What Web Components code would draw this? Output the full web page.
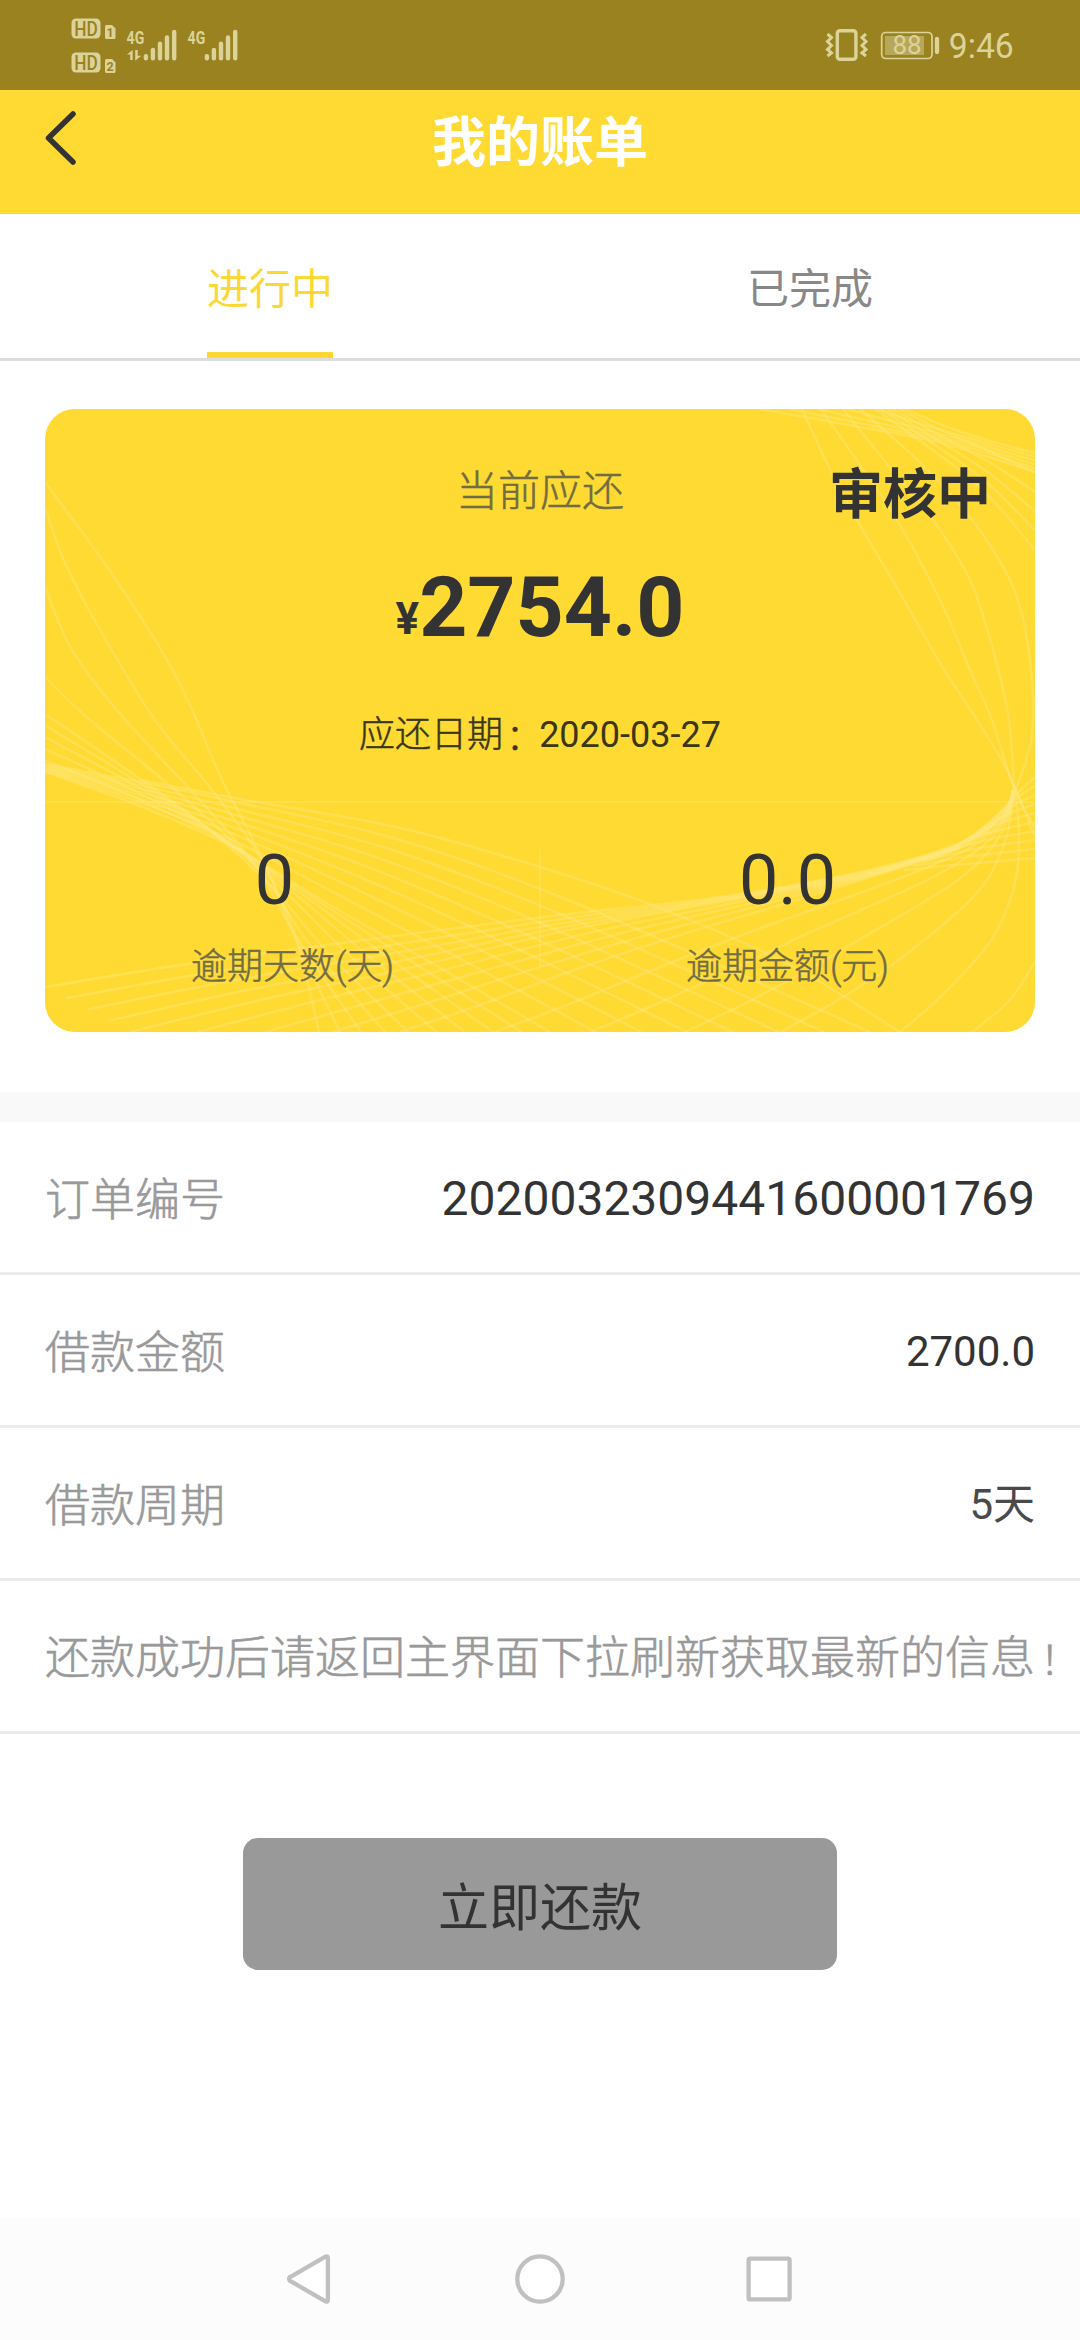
<!DOCTYPE html>
<html lang="zh-CN">
<head>
<meta charset="utf-8">
<title>我的账单</title>
<style>
html,body{margin:0;padding:0;background:#fff}
body{width:1080px;height:2340px;overflow:hidden;font-family:Roboto,"Noto Sans CJK SC",sans-serif;color:#333}
</style>
</head>
<body>
<bill-page></bill-page>
<script>
const define = (name, html, setup) => customElements.define(name, class extends HTMLElement {
  constructor() {
    super();
    const t = document.createElement('template');
    t.innerHTML = html;
    this.attachShadow({ mode: 'open' }).append(t.content.cloneNode(true));
  }
  connectedCallback() { if (setup) setup(this, this.shadowRoot); }
});

define('status-bar', `
<style>
:host{display:flex;justify-content:space-between;height:90px;background:#99821f}
svg{display:block}
text{font-family:Roboto,sans-serif}
</style>
<svg width="300" height="90" fill="#dcd399">
  <rect x="71.5" y="18.5" width="29" height="20" rx="4.5"/>
  <rect x="71.5" y="52.5" width="29" height="20" rx="4.5"/>
  <g fill="#99821f" font-size="19.5" font-weight="500">
    <text x="74.3" y="35.6" textLength="23.6" lengthAdjust="spacingAndGlyphs">HD</text>
    <text x="74.3" y="69.6" textLength="23.6" lengthAdjust="spacingAndGlyphs">HD</text>
  </g>
  <path d="M106.5 25H112l3.500 3.500V37.500a1.500 1.500 0 0 1-1.500 1.500h-7.500a1.500 1.500 0 0 1-1.500-1.500v-11a1.500 1.500 0 0 1 1.500-1.500Z"/>
  <path d="M106.500 59H112l3.500 3.500V71.500a1.500 1.500 0 0 1-1.500 1.500h-7.500a1.500 1.500 0 0 1-1.500-1.500v-11a1.500 1.500 0 0 1 1.500-1.500Z"/>
  <g fill="#99821f" font-size="12.500" font-weight="700" text-anchor="middle">
    <text x="110" y="36.800">1</text><text x="110.200" y="71">2</text>
  </g>
  <g font-size="19" font-weight="700">
    <text x="126.600" y="43.500" textLength="17.600" lengthAdjust="spacingAndGlyphs">4G</text>
    <text x="187.600" y="43.500" textLength="17.600" lengthAdjust="spacingAndGlyphs">4G</text>
  </g>
  <path d="M132.700 50v10h-2.500v-5.500h-3.400ZM135.200 50h2.500v5.800h3.600l-6.100 5Z"/>
  <g stroke="#dcd399" stroke-width="4.400" stroke-linecap="round">
    <path d="M145.900 56.200v2M152.900 50v8.200M160 43.600v14.600M167 37.500v20.700M174.200 32v26.200"/>
    <path d="M206.900 56.200v2M213.900 50v8.200M221 43.600v14.600M228 37.500v20.700M235.200 32v26.200"/>
  </g>
</svg>
<svg width="280" height="90" fill="none" stroke="#dcd399">
  <rect x="37.300" y="30.700" width="18.600" height="28.600" rx="2.500" stroke-width="3.400"/>
  <path d="M27.500 34l4 3.500-4 4 4 4-4 4 4 3.500-4 3M66 34l-4 3.500 4 4-4 4 4 4-4 3.500 4 3" stroke-width="3"/>
  <rect x="81.700" y="32.500" width="50.300" height="26" rx="4" stroke-width="1.700"/>
  <rect x="85" y="36" width="39" height="19" fill="#b8a758" stroke="none"/>
  <path d="M137 39v13" stroke-width="4.300" stroke-linecap="round"/>
  <g fill="#dcd399" stroke="none">
    <text x="107" y="54.300" font-size="26" text-anchor="middle">88</text>
    <text x="148.800" y="57.800" font-size="34.500" textLength="65" lengthAdjust="spacingAndGlyphs">9:46</text>
  </g>
</svg>`);

define('title-bar', `
<style>
:host{display:grid;grid-template-columns:90px 1fr 90px;height:124px;background:#ffda33}
svg{margin:18px 0 0 42px}
h1{margin:14px 0 0;height:80px;line-height:80px;font-size:54px;font-weight:700;color:#fff;text-align:center}
</style>
<svg width="40" height="60" fill="none" stroke="#333" stroke-width="5.500" stroke-linecap="round" stroke-linejoin="round"><path d="M31 6 6.500 30 31 54"/></svg>
<h1><slot></slot></h1>`);

define('tab-item', `
<style>
:host{display:flex;flex:1;justify-content:center;color:#888}
span{box-sizing:border-box;height:144px;padding-top:46px;line-height:60px;font-size:42px}
:host([active]) span{color:#fdd835;border-bottom:6px solid #fdd835}
</style><span><slot></slot></span>`);

define('tab-strip', `
<style>:host{display:flex;height:144px;border-bottom:3px solid #ddd}</style><slot></slot>`);

define('wave-lines', `
<style>:host{display:block;position:absolute;inset:0}svg{display:block;opacity:.38}</style>
<svg width="990" height="623" viewBox="45 409 990 623" fill="none" stroke="#fff" stroke-opacity=".4" stroke-width="2.500"></svg>`,
(host, root) => {
  const svg = root.querySelector('svg');
  const draw = p => {
    let d = `M${p[0]}`;
    for (let i = 0; i < p.length - 1; i++) {
      const a = p[i - 1] || p[i], b = p[i], c = p[i + 1], e = p[i + 2] || c;
      d += `C${b[0] + (c[0] - a[0]) / 6} ${b[1] + (c[1] - a[1]) / 6} ${c[0] - (e[0] - b[0]) / 6} ${c[1] - (e[1] - b[1]) / 6} ${c[0]} ${c[1]}`;
    }
    const el = document.createElementNS('http://www.w3.org/2000/svg', 'path');
    el.setAttribute('d', d);
    svg.append(el);
  };
  const blend = (from, to, n) => {
    for (let k = 0; k < n; k++) draw(from.map(([x, y], i) => [x + (to[i][0] - x) * k / n, y + (to[i][1] - y) * k / n]));
  };
  // sheaf that falls from the left edge
  draw([[45,482],[119,584],[178,680],[222,780],[253,840],[290,920],[306,975],[319,1032]]);
  draw([[45,508],[66,565],[99,628],[155,720],[212,790],[262,860],[296,940],[340,1032]]);
  draw([[45,587],[72,650],[121,715],[195,795],[255,865],[298,940],[361,1032]]);
  draw([[45,677],[90,720],[175,790],[255,865],[310,945],[385,1032]]);
  const f1 = [[45,714],[120,765],[200,822],[270,885],[330,955],[408,1032]];
  const f2 = [[45,772],[140,806],[235,848],[330,905],[435,965],[550,1032]];
  const f3 = [[45,764],[150,784],[240,803],[400,840],[580,905],[870,1032]];
  blend(f1, f2, 5); blend(f2, f3, 7); draw(f3);
  draw([[140,780],[240,799],[400,828],[540,867],[660,908],[790,965],[900,1032]]);
  // sheaf that climbs to the knot at the right edge
  const r1 = [[45,987],[200,962],[380,938],[560,915],[720,897],[860,872],[955,845],[1002,815],[1013,790]];
  const r2 = [[130,1032],[260,1000],[400,970],[560,932],[720,902],[860,876],[955,848],[1003,818],[1013,790]];
  const r3 = [[400,1032],[480,1005],[580,968],[680,935],[780,905],[880,874],[960,848],[1003,820],[1013,790]];
  const r4 = [[780,1032],[833,1003],[885,970],[933,933],[965,905],[987,880],[1004,845],[1011,815],[1014,790]];
  blend(r1, r2, 4);
  blend(r2.slice(0, -2), r3.slice(0, -2), 4);
  blend(r3, r4, 4); draw(r4);
  draw([[1015,790],[1019,837],[1014,887],[990,942],[940,997],[900,1032]]);
  draw([[1035,962],[1010,1000],[972,1032]]);
  // long strands between the top edge and the knot
  draw([[802,409],[827,463],[857,520],[900,593],[940,663],[977,720],[1007,770],[1035,837]]);
  draw([[821,409],[862,468],[897,520],[940,600],[973,677],[992,720],[1013,785],[1035,828]]);
  draw([[843,409],[888,465],[933,520],[970,580],[993,650],[1009,720],[1014,790]]);
  draw([[860,409],[915,458],[970,517],[1013,587],[1030,660],[1032,735],[1015,792],[1002,822]]);
  // sheaf that cuts the top right corner
  const t1 = [[875,409],[930,448],[985,492],[1035,550]];
  const t2 = [[905,409],[945,426],[990,441],[1035,453]];
  const t3 = [[760,409],[860,427],[945,444],[1035,472]];
  blend(t1, t2, 5); blend(t2, t3, 5); draw(t3);
  // short strands right of the knot
  for (let i = 0; i < 10; i++) draw([[1035, 777 + i * 9], [1014 - i * 6, 797 + i * 7.500], [985 - i * 9, 834 + i * 4]]);
});

define('bill-stat', `
<style>
:host{display:flex;flex:1;flex-direction:column;align-items:center}
b{font-weight:400;font-size:70px;line-height:80px;margin-right:var(--shift,0)}
span{margin-top:22px;line-height:50px;font-size:36px;color:#716c43;font-weight:300;-webkit-text-stroke:.5px #716c43}
</style><b><slot></slot></b><span><slot name="label"></slot></span>`);

define('bill-card', `
<style>
:host{display:block;position:relative;margin:48px 45px 0;height:623px;border-radius:30px;background:#ffda33;overflow:hidden}
.body{position:relative;display:flex;flex-direction:column}
.top{display:grid;grid-template-columns:1fr auto 1fr;margin-top:53px;height:60px;line-height:60px;font-size:42px;color:#716c43;font-weight:300;-webkit-text-stroke:.5px #716c43}
.state{justify-self:end;margin-right:44px;line-height:67px;font-size:54px;font-weight:700;color:#333;-webkit-text-stroke:0}
.sum{margin-top:36px;line-height:100px;height:100px;text-align:center;font-size:84px;font-weight:700;white-space:nowrap}
.sum small{display:inline-block;font-size:44px;line-height:50px;transform:translateY(-2px)}
.date{margin-top:52px;line-height:50px;font-size:36px;text-align:center;color:#3a3616;font-weight:400}
.date .han{font-weight:300;-webkit-text-stroke:.5px #3a3616}
.colon{display:inline-block;transform:translate(3px,3px)}
.rule{margin-top:41px;height:2px;background:#ffffff1c}
.stats{display:flex;margin-top:37px}
.stats i{width:2px;margin:9px -1px 0;height:118px;background:#ffffff1c}
</style>
<wave-lines></wave-lines>
<div class="body">
  <div class="top"><span></span><span>当前应还</span><span class="state">审核中</span></div>
  <div class="sum"><small>¥</small>2754.0</div>
  <div class="date"><span class="han">应还日期<span class="colon">：</span></span>2020-03-27</div>
  <div class="rule"></div>
  <div class="stats">
    <bill-stat style="--shift:36px">0<span slot="label">逾期天数(天)</span></bill-stat><i></i>
    <bill-stat>0.0<span slot="label">逾期金额(元)</span></bill-stat>
  </div>
</div>`);

define('info-row', `
<style>
:host{display:flex;align-items:center;justify-content:space-between;height:150px;padding:0 45px;border-bottom:3px solid #ebebeb;white-space:nowrap}
.k{padding-top:7px;line-height:60px;font-size:45px;color:#999;font-weight:300;-webkit-text-stroke:.6px #999}
.v{padding-top:4px;line-height:60px;font-size:var(--size,42px);color:var(--ink,#333);font-weight:400}
</style><span class="k"><slot></slot></span><span class="v"><slot name="value"></slot></span>`);

define('pay-button', `
<style>
:host{display:flex;justify-content:center;margin-top:104px}
button{box-sizing:border-box;width:594px;height:132px;padding:10px 0 0;border:0;border-radius:15px;background:#999;color:#333;font:400 51px/60px Roboto,"Noto Sans CJK SC",sans-serif}
</style><button><slot></slot></button>`);

define('nav-bar', `
<style>
:host{display:block;height:122px;background:#fcfcfc}
svg{display:block}
</style>
<svg width="1080" height="122" fill="#fff" stroke="#c0c0c0" stroke-width="4.300" stroke-linejoin="round">
  <path d="M289.600 59.400 325.500 38.600Q327.900 37.500 327.900 40.500V81.500Q327.900 84.500 325.500 83.400L289.600 62.600Q288.600 61 289.600 59.400Z"/>
  <circle cx="540" cy="61" r="22.700"/>
  <rect x="748.600" y="40.700" width="41" height="40.700" rx="1.500"/>
</svg>`);

define('bill-page', `
<style>
:host{display:flex;flex-direction:column;width:1080px;height:2340px;background:#fff}
.gap{height:30px;margin-top:60px;background:#f9f9f9}
.mark{font-size:39px;margin-left:5px}
nav-bar{margin-top:auto}
</style>
<status-bar></status-bar>
<title-bar>我的账单</title-bar>
<tab-strip><tab-item active>进行中</tab-item><tab-item>已完成</tab-item></tab-strip>
<bill-card></bill-card>
<div class="gap"></div>
<info-row style="--size:48px">订单编号<span slot="value">2020032309441600001769</span></info-row>
<info-row>借款金额<span slot="value">2700.0</span></info-row>
<info-row style="--ink:#4a4a4a">借款周期<span slot="value">5天</span></info-row>
<info-row>还款成功后请返回主界面下拉刷新获取最新的信息<span class="mark">！</span></info-row>
<pay-button>立即还款</pay-button>
<nav-bar></nav-bar>`);
</script>
</body>
</html>
